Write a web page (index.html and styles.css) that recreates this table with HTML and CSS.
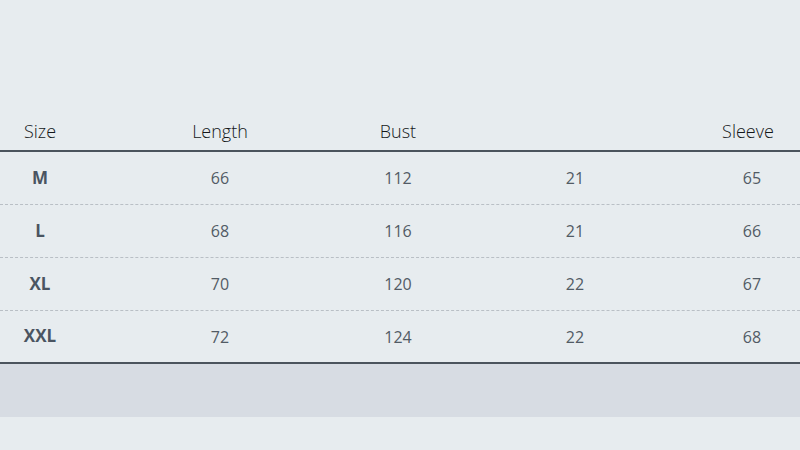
FILE: index.html
```html
<!DOCTYPE html>
<html>
<head>
<meta charset="utf-8">
<link rel="stylesheet" href="styles.css">
</head>
<body>
<div class="page">
  <div class="table">
    <div class="row head">
      <div class="cell">Size</div>
      <div class="cell">Length</div>
      <div class="cell">Bust</div>
      <div class="cell"></div>
      <div class="cell sleeve">Sleeve</div>
    </div>
    <div class="row">
      <div class="cell size">M</div>
      <div class="cell">66</div>
      <div class="cell">112</div>
      <div class="cell">21</div>
      <div class="cell">65</div>
    </div>
    <div class="row">
      <div class="cell size">L</div>
      <div class="cell">68</div>
      <div class="cell">116</div>
      <div class="cell">21</div>
      <div class="cell">66</div>
    </div>
    <div class="row">
      <div class="cell size">XL</div>
      <div class="cell">70</div>
      <div class="cell">120</div>
      <div class="cell">22</div>
      <div class="cell">67</div>
    </div>
    <div class="row last">
      <div class="cell size">XXL</div>
      <div class="cell">72</div>
      <div class="cell">124</div>
      <div class="cell">22</div>
      <div class="cell">68</div>
    </div>
  </div>
  <div class="band"></div>
</div>
</body>
</html>
```

FILE: styles.css
```css
html, body {
  margin: 0;
  padding: 0;
  background: #e7ecef;
}
.page {
  width: 800px;
  height: 450px;
  padding-top: 110px;
  box-sizing: border-box;
  font-family: "Open Sans", "Noto Sans", sans-serif;
}
.table {
  display: flex;
  flex-direction: column;
}
.row {
  display: grid;
  grid-template-columns: 80px 280px 76px 278px 76px;
  align-items: center;
  height: 52px;
  border-bottom: 1px dashed #b9bfc5;
}
.row.head {
  height: 40px;
  border-bottom: 2px solid #4b545d;
  align-items: start;
}
.row.last {
  height: 51px;
  border-bottom: 2px solid #4b545d;
}
.cell {
  text-align: center;
  font-size: 16px;
  color: #525b65;
}
.row.head .cell {
  font-size: 18px;
  font-weight: 300;
  color: #141719;
  padding-top: 9px;
  line-height: 24px;
}
.row.head .cell.sleeve {
  margin-left: -8px;
}
.size {
  font-size: 17px;
  font-weight: 700;
  color: #4a5461;
  margin-bottom: 2px;
}
.band {
  height: 53px;
  background: #d7dce3;
}
```
